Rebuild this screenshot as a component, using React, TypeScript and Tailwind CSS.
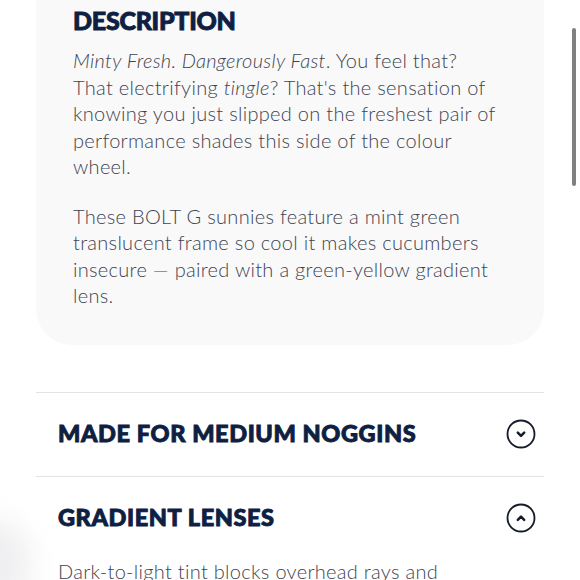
import { useState } from 'react';

const heading =
  "font-['Lato',sans-serif] font-black uppercase text-[#0e2041] [-webkit-text-stroke:0.9px_#0e2041]";
const body = "font-['Lato',sans-serif] font-light text-[20px] leading-[26.5px] tracking-[0.015em] text-[#3d4450]";

function ChevronCircle({ open }: { open: boolean }) {
  return (
    <svg width="30" height="30" viewBox="0 0 30 30" fill="none" className="shrink-0">
      <circle cx="15" cy="15" r="13.5" stroke="#161b2b" strokeWidth="1.8" />
      {open ? (
        <path d="M11.8 16.8 15 13.6l3.2 3.2" stroke="#161b2b" strokeWidth="2.5" strokeLinecap="round" strokeLinejoin="round" />
      ) : (
        <path d="M11.8 13.6 15 16.8l3.2-3.2" stroke="#161b2b" strokeWidth="2.5" strokeLinecap="round" strokeLinejoin="round" />
      )}
    </svg>
  );
}

interface Section {
  title: string;
  text: string;
}

const SECTIONS: Section[] = [
  {
    title: 'Made for medium noggins',
    text: 'Sized for medium faces with a snug, no-slip fit that stays put when things get fast.',
  },
  {
    title: 'Gradient lenses',
    text: 'Dark-to-light tint blocks overhead rays and keeps the view ahead crisp and clear.',
  },
];

export default function App() {
  const [open, setOpen] = useState<number | null>(1);

  return (
    <div className="relative h-[580px] overflow-hidden bg-white px-[36px]">
      {/* Description card (page is scrolled, top is above the fold) */}
      <div className="-mt-[40px] rounded-[36px] bg-[#f9f9fa] pl-[37px] pr-[47px] pt-[48px] pb-[36px]">
        <h2 className={`${heading} text-[25px] leading-[25px] tracking-[-0.01em]`}>Description</h2>
        <p className={`${body} mt-[14px]`}>
          <em>Minty Fresh. Dangerously Fast</em>. You feel that? That electrifying <em>tingle</em>? That's the
          sensation of knowing you just slipped on the freshest pair of performance shades this side of the colour
          wheel.
        </p>
        <p className={`${body} mt-[23px]`}>
          These BOLT G sunnies feature a mint green translucent frame so cool it makes cucumbers insecure — paired
          with a green-yellow gradient lens.
        </p>
      </div>

      {/* Accordion */}
      <div className="mt-[47px]">
        {SECTIONS.map((s, i) => (
          <div key={s.title} className="border-t border-[#e3e3e5]">
            <button
              onClick={() => setOpen(open === i ? null : i)}
              className="flex h-[83px] w-full items-center justify-between pl-[22px] pr-[8px] text-left"
            >
              <span className={`${heading} -mt-[3px] text-[23.5px] leading-[24px] tracking-[0.025em]`}>{s.title}</span>
              <ChevronCircle open={open === i} />
            </button>
            {open === i && <p className={`${body} -mt-[2px] pl-[22px] pr-[90px] pb-6`}>{s.text}</p>}
          </div>
        ))}
      </div>

      {/* faint shadow bottom-left */}
      <div className="pointer-events-none absolute -bottom-[30px] -left-[45px] h-[90px] w-[75px] rounded-full bg-[#efeff1] blur-[14px]" />

      {/* scrollbar */}
      <div className="absolute right-[4px] top-[28px] h-[158px] w-[4px] rounded-full bg-[#808080]" />
    </div>
  );
}
